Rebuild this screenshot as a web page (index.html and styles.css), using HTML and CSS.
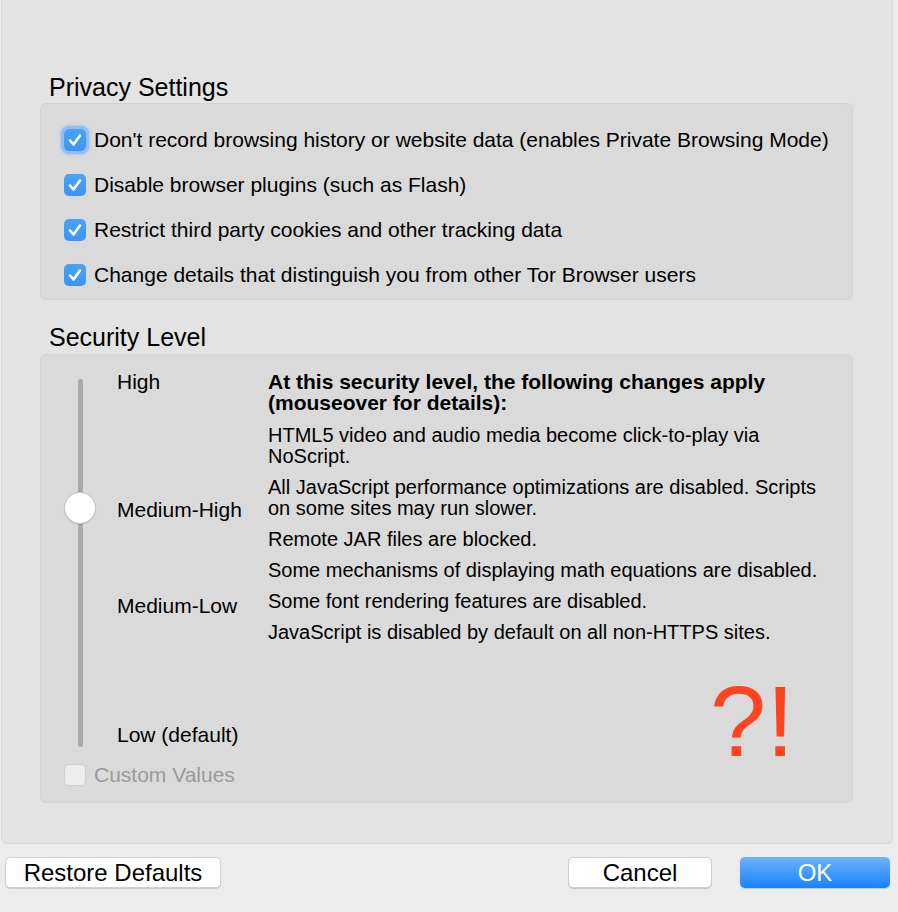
FILE: index.html
```html
<!DOCTYPE html>
<html lang="en">
<head>
  <meta charset="UTF-8">
  <title>Privacy and Security Settings</title>
  <link rel="stylesheet" href="styles.css">
</head>
<body>

  <div class="panel">
    <h2 class="group-title privacy-title">Privacy Settings</h2>
    <div class="group privacy">
      <label class="check-row">
        <span class="box checked focused"><svg viewBox="0 0 22 22"><path d="M6 11.5 L9.5 15.5 L16 6.5" /></svg></span>
        Don't record browsing history or website data (enables Private Browsing Mode)
      </label>
      <label class="check-row">
        <span class="box checked"><svg viewBox="0 0 22 22"><path d="M6 11.5 L9.5 15.5 L16 6.5" /></svg></span>
        Disable browser plugins (such as Flash)
      </label>
      <label class="check-row">
        <span class="box checked"><svg viewBox="0 0 22 22"><path d="M6 11.5 L9.5 15.5 L16 6.5" /></svg></span>
        Restrict third party cookies and other tracking data
      </label>
      <label class="check-row">
        <span class="box checked"><svg viewBox="0 0 22 22"><path d="M6 11.5 L9.5 15.5 L16 6.5" /></svg></span>
        Change details that distinguish you from other Tor Browser users
      </label>
    </div>

    <h2 class="group-title security-title">Security Level</h2>
    <div class="group security">
      <div class="level">
        <div class="slider">
          <div class="track"></div>
          <div class="knob"></div>
        </div>
        <div class="labels">
          <div class="lbl lbl-high">High</div>
          <div class="lbl lbl-mhigh">Medium-High</div>
          <div class="lbl lbl-mlow">Medium-Low</div>
          <div class="lbl lbl-low">Low (default)</div>
        </div>
        <div class="desc">
          <p class="desc-head">At this security level, the following changes apply (mouseover for details):</p>
          <p>HTML5 video and audio media become click-to-play via NoScript.</p>
          <p>All JavaScript performance optimizations are disabled. Scripts on some sites may run slower.</p>
          <p>Remote JAR files are blocked.</p>
          <p>Some mechanisms of displaying math equations are disabled.</p>
          <p>Some font rendering features are disabled.</p>
          <p>JavaScript is disabled by default on all non-HTTPS sites.</p>
        </div>
      </div>
      <label class="check-row custom">
        <span class="box"></span>
        Custom Values
      </label>
      <div class="note">?!</div>
    </div>
  </div>

  <div class="buttons">
    <button class="btn btn-restore">Restore Defaults</button>
    <div class="spacer"></div>
    <button class="btn btn-cancel">Cancel</button>
    <button class="btn btn-ok">OK</button>
  </div>

</body>
</html>
```

FILE: styles.css
```css
body {
  margin: 0;
  background: #ececec;
  font-family: "Liberation Sans", Arial, sans-serif;
  font-size: 21px;
  color: #000;
  width: 898px;
  height: 912px;
  overflow: hidden;
}

.panel {
  margin: 0 5px 0 1px;
  height: 844px;
  box-sizing: border-box;
  background: #e3e3e3;
  border: 1px solid #d8d8d8;
  border-top: none;
  border-radius: 0 0 6px 6px;
  padding: 0 39px 0 38px;
}

.group-title {
  margin: 0;
  font-weight: normal;
  font-size: 25px;
  line-height: 28px;
  padding-left: 9px;
}

.privacy-title {
  padding-top: 73px;
  margin-bottom: 2px;
}

.security-title {
  padding-top: 23px;
  margin-bottom: 3px;
}

.group {
  background: #dadada;
  border: 1px solid #d3d3d3;
  border-radius: 6px;
}

.privacy {
  height: 197px;
  box-sizing: border-box;
  padding: 24px 0 0 23px;
  display: flex;
  flex-direction: column;
  gap: 22px;
}

.check-row {
  display: flex;
  align-items: center;
  gap: 8px;
  height: 23px;
  line-height: 23px;
  white-space: nowrap;
}

.box {
  width: 22px;
  height: 22px;
  box-sizing: border-box;
  border-radius: 5px;
  background: #f2f2f2;
  border: 1px solid #c9c9c9;
  flex-shrink: 0;
}

.box.checked {
  background: linear-gradient(#4aa3f8, #3a95f3);
  border: none;
}

.box.focused {
  box-shadow: 0 0 0 3px #93bff0, 0 0 2px 4px rgba(147, 191, 240, 0.6);
}

.box svg {
  display: block;
  width: 22px;
  height: 22px;
}

.box svg path {
  fill: none;
  stroke: #fff;
  stroke-width: 2.6;
  stroke-linecap: round;
  stroke-linejoin: round;
}

.security {
  position: relative;
  height: 449px;
  box-sizing: border-box;
  padding: 16px 0 0 23px;
}

.level {
  display: grid;
  grid-template-columns: 53px 151px 1fr;
}

.slider {
  position: relative;
  height: 392px;
}

.track {
  width: 5px;
  height: 368px;
  margin: 8px 0 0 14px;
  background: #a9a9a9;
  border-radius: 3px;
}

.knob {
  position: absolute;
  left: 1px;
  top: 122px;
  width: 30px;
  height: 30px;
  border-radius: 50%;
  background: #fff;
  box-shadow: 0 0 0 1px #c4c4c4, 0 1px 2px rgba(0, 0, 0, 0.25);
}

.labels {
  display: flex;
  flex-direction: column;
  line-height: 21px;
}

.lbl-mhigh { margin-top: 107px; }
.lbl-mlow { margin-top: 75px; }
.lbl-low { margin-top: 108px; }

.desc {
  font-size: 20px;
  line-height: 21px;
  width: 565px;
}

.desc p {
  margin: 0 0 10px;
}

.desc .desc-head {
  font-size: 21px;
  font-weight: bold;
  margin-bottom: 12px;
}

.custom {
  color: #9a9a9a;
}

.custom .box {
  background: #ececec;
  border-color: #cfcfcf;
}

.note {
  position: absolute;
  left: 669px;
  top: 316px;
  font-family: "Liberation Sans", Arial, sans-serif;
  font-size: 101px;
  line-height: 100px;
  color: #ff4422;
}

.buttons {
  display: flex;
  align-items: center;
  gap: 28px;
  padding: 13px 8px 0 5px;
}

.spacer {
  flex: 1;
}

.btn {
  font-family: "Liberation Sans", Arial, sans-serif;
  font-size: 24px;
  height: 31px;
  padding: 0;
  background: #fff;
  border: 1px solid #cfcfcf;
  border-radius: 5px;
  box-shadow: 0 1px 1px rgba(0, 0, 0, 0.15);
  color: #000;
}

.btn-restore {
  width: 216px;
}

.btn-cancel {
  width: 144px;
}

.btn-ok {
  width: 150px;
  border: none;
  color: #fff;
  background: linear-gradient(#6db4fa, #1b81fa);
}
```
